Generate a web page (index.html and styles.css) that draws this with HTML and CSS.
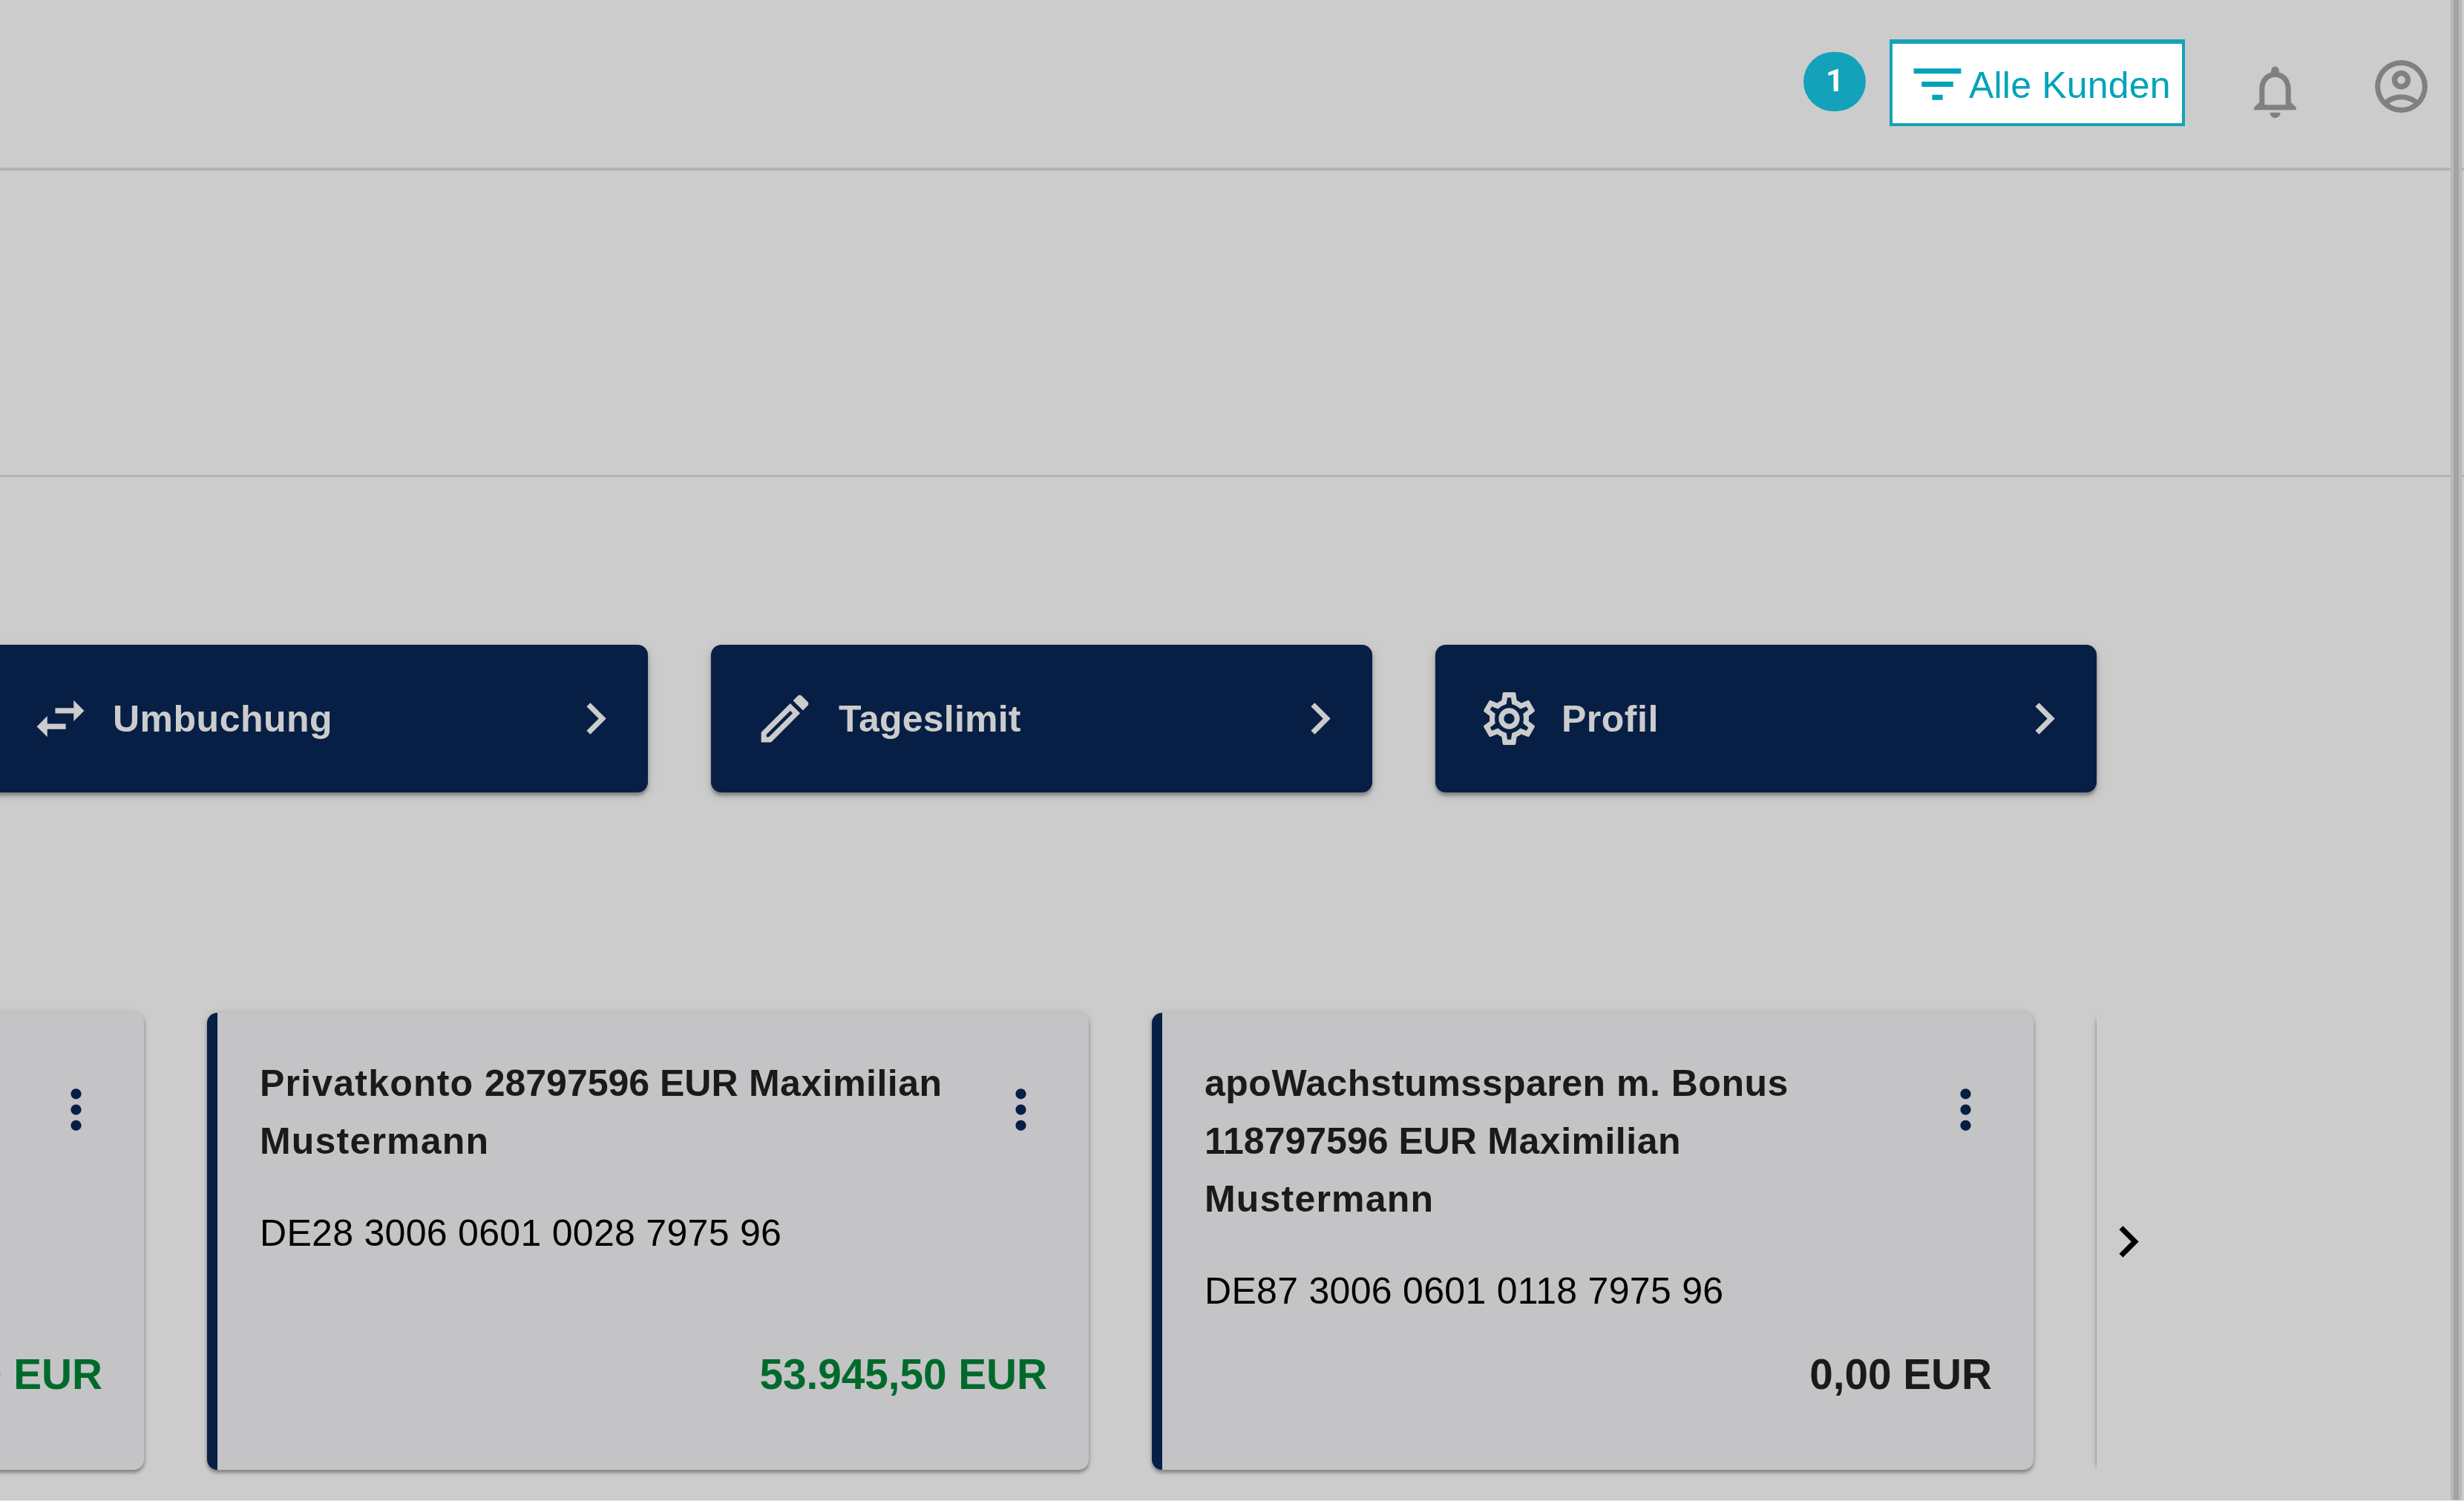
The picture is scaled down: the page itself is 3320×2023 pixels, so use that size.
FILE: index.html
```
<!DOCTYPE html>
<html lang="de">
    <head>
        <meta charset="utf-8">
        <title>Banking Übersicht</title>
        <link rel="stylesheet" href="styles.css">
    </head>
    <body>
        <!-- icon set, 24px grid -->
        <svg class="symbols">
            <symbol id="chevron" viewBox="0 0 24 24"><path d="M10 6L8.59 7.41 13.17 12l-4.58 4.59L10 18l6-6z"/></symbol>
            <symbol id="more" viewBox="0 0 24 24"><path d="M12 8c1.1 0 2-.9 2-2s-.9-2-2-2-2 .9-2 2 .9 2 2 2zm0 2c-1.1 0-2 .9-2 2s.9 2 2 2 2-.9 2-2-.9-2-2-2zm0 6c-1.1 0-2 .9-2 2s.9 2 2 2 2-.9 2-2-.9-2-2-2z"/></symbol>
        </svg>
        <div class="page">
            <header class="topbar">
                <span class="step">1</span>
                <button class="filter" type="button">
                    <svg class="icon" viewBox="0 0 24 24"><path d="M10 18h4v-2h-4v2zM3 6v2h18V6H3zm3 7h12v-2H6v2z"/></svg>
                    <span>Alle Kunden</span>
                </button>
                <svg class="icon bell" viewBox="0 0 24 24"><path d="M12 22c1.1 0 2-.9 2-2h-4c0 1.1.9 2 2 2zm6-6v-5c0-3.07-1.63-5.64-4.5-6.32V4c0-.83-.67-1.5-1.5-1.5s-1.5.67-1.5 1.5v.68C7.64 5.36 6 7.92 6 11v5l-2 2v1h16v-1l-2-2zm-2 1H8v-6c0-2.48 1.51-4.5 4-4.5s4 2.02 4 4.5v6z"/></svg>
                <svg class="icon user" viewBox="0 0 24 24"><path fill-rule="evenodd" d="M12 2a10 10 0 1 0 0 20 10 10 0 0 0 0-20zM7.35 18.5C8.66 17.56 10.26 17 12 17s3.34.56 4.65 1.5C15.34 19.44 13.74 20 12 20s-3.34-.56-4.65-1.5zm10.79-1.38C16.45 15.8 14.32 15 12 15s-4.45.8-6.14 2.12A7.96 7.96 0 0 1 4 12c0-4.42 3.58-8 8-8s8 3.58 8 8c0 1.95-.7 3.73-1.86 5.12zM12 5.9c-1.98 0-3.6 1.62-3.6 3.6s1.62 3.6 3.6 3.6 3.6-1.62 3.6-3.6-1.62-3.6-3.6-3.6zm0 5.1a1.5 1.5 0 1 1 0-3 1.5 1.5 0 0 1 0 3z"/></svg>
            </header>
            <div class="subbar"></div>
            <nav class="actions">
                <a class="action">
                    <svg class="icon" viewBox="0 0 24 24"><path d="M6.99 11L3 15l3.99 4v-3H14v-2H6.99v-3zM21 9l-3.99-4v3H10v2h7.01v3L21 9z"/></svg>
                    <span class="label">Umbuchung</span>
                    <svg class="icon"><use href="#chevron"/></svg>
                </a>
                <a class="action">
                    <svg class="icon" viewBox="0 0 24 24"><path d="M14.06 9.02l.92.92L5.92 19H5v-.92l9.06-9.06M17.66 3c-.25 0-.51.1-.7.29l-1.83 1.83 3.75 3.75 1.83-1.83c.39-.39.39-1.02 0-1.41l-2.34-2.34c-.2-.2-.45-.29-.71-.29zm-3.6 3.19L3 17.25V21h3.75L17.81 9.94l-3.75-3.75z"/></svg>
                    <span class="label tight">Tageslimit</span>
                    <svg class="icon"><use href="#chevron"/></svg>
                </a>
                <a class="action">
                    <svg class="icon" viewBox="0 0 24 24"><path d="M19.43 12.98c.04-.32.07-.64.07-.98 0-.34-.03-.66-.07-.98l2.11-1.65c.19-.15.24-.42.12-.64l-2-3.46c-.09-.16-.26-.25-.44-.25-.06 0-.12.01-.17.03l-2.49 1c-.52-.4-1.08-.73-1.69-.98l-.38-2.65C14.46 2.18 14.25 2 14 2h-4c-.25 0-.46.18-.49.42l-.38 2.65c-.61.25-1.17.59-1.69.98l-2.49-1c-.06-.02-.12-.03-.18-.03-.17 0-.34.09-.43.25l-2 3.46c-.13.22-.07.49.12.64l2.11 1.65c-.04.32-.07.65-.07.98 0 .33.03.66.07.98l-2.11 1.65c-.19.15-.24.42-.12.64l2 3.46c.09.16.26.25.44.25.06 0 .12-.01.17-.03l2.49-1c.52.4 1.08.73 1.69.98l.38 2.65c.03.24.24.42.49.42h4c.25 0 .46-.18.49-.42l.38-2.65c.61-.25 1.17-.59 1.69-.98l2.49 1c.06.02.12.03.18.03.17 0 .34-.09.43-.25l2-3.46c.12-.22.07-.49-.12-.64l-2.11-1.65zm-1.98-1.71c.04.31.05.52.05.73 0 .21-.02.43-.05.73l-.14 1.13.89.7 1.08.84-.7 1.21-1.27-.51-1.04-.42-.9.68c-.43.32-.84.56-1.25.73l-1.06.43-.16 1.13-.2 1.35h-1.4l-.19-1.35-.16-1.13-1.06-.43c-.43-.18-.83-.41-1.23-.71l-.91-.7-1.06.43-1.27.51-.7-1.21 1.08-.84.89-.7-.14-1.13c-.03-.31-.05-.54-.05-.74s.02-.43.05-.73l.14-1.13-.89-.7-1.08-.84.7-1.21 1.27.51 1.04.42.9-.68c.43-.32.84-.56 1.25-.73l1.06-.43.16-1.13.2-1.35h1.39l.19 1.35.16 1.13 1.06.43c.43.18.83.41 1.23.71l.91.7 1.06-.43 1.27-.51.7 1.21-1.07.85-.89.7.14 1.13zM12 8c-2.21 0-4 1.79-4 4s1.79 4 4 4 4-1.79 4-4-1.79-4-4-4zm0 6c-1.1 0-2-.9-2-2s.9-2 2-2 2 .9 2 2-.9 2-2 2z"/></svg>
                    <span class="label">Profil</span>
                    <svg class="icon"><use href="#chevron"/></svg>
                </a>
            </nav>
            <div class="slider">
                <div class="accounts">
                    <div class="account">
                        <div class="head">
                            <h3></h3>
                            <svg class="icon"><use href="#more"/></svg>
                        </div>
                        <p class="amount positive">0 EUR</p>
                    </div>
                    <div class="account">
                        <div class="head">
                            <h3><span class="wide">Privatkonto</span> <span class="number">28797596 EUR</span> Maximilian <span class="wide">Mustermann</span></h3>
                            <svg class="icon"><use href="#more"/></svg>
                        </div>
                        <p class="iban">DE28 3006 0601 0028 7975 96</p>
                        <p class="amount positive">53.945,50 EUR</p>
                    </div>
                    <div class="account">
                        <div class="head">
                            <h3>apoWachstumssparen m. Bonus <span class="number">118797596 EUR</span> Maximilian <span class="wide">Mustermann</span></h3>
                            <svg class="icon"><use href="#more"/></svg>
                        </div>
                        <p class="iban">DE87 3006 0601 0118 7975 96</p>
                        <p class="amount">0,00 EUR</p>
                    </div>
                    <div class="account"></div>
                </div>
                <svg class="icon next"><use href="#chevron"/></svg>
            </div>
        </div>
        <div class="scrollbar"></div>
    </body>
</html>
```
FILE: styles.css
```
:root {
    --navy: #071f45;
    --teal: #14a2ba;
    --line: #b3b3b3;
    background-color: #eee;
}
* {
    box-sizing: border-box;
}
body {
    margin: 0;
    height: 2022px;
    overflow: hidden;
    background-color: #ccc;
    color: #1a1a1a;
    font-family: "Liberation Sans", Arial, sans-serif;
    font-size: 50px;
}
h3, p {
    margin: 0;
}
.symbols {
    display: none;
}
.icon {
    flex: none;
    width: 85px;
    height: 85px;
    fill: currentColor;
}
.topbar {
    display: flex;
    align-items: flex-start;
    height: 230px;
    padding-right: 42px;
    border-bottom: 4px solid var(--line);
    color: #808080;
}
.step {
    width: 84px;
    height: 80px;
    margin: 70px 32px 0 auto;
    border-radius: 42px;
    background-color: var(--teal);
    color: #fff;
    font: bold 42px/78px Roboto, sans-serif;
    text-align: center;
}
.filter {
    display: flex;
    align-items: center;
    width: 398px;
    height: 117px;
    margin-top: 53px;
    padding: 2px 0 0 18px;
    border: 4px solid var(--teal);
    border-top-width: 6px;
    background-color: #fff;
    color: #00a3b9;
    font: inherit;
    letter-spacing: .2px;
    white-space: nowrap;
}
.filter span {
    padding-top: 2px;
}
.bell {
    margin: 81px 0 0 79px;
}
.user {
    margin: 74px 0 0 85px;
}
.subbar {
    height: 413px;
    border-bottom: 3px solid var(--line);
}
.actions {
    display: flex;
    gap: 85px;
    margin: 226px 0 0 -18px;
}
.action {
    display: flex;
    align-items: center;
    width: 891px;
    height: 199px;
    padding: 0 28px 0 57px;
    border-radius: 14px;
    background-color: var(--navy);
    box-shadow: 0 4px 4px rgba(0, 0, 0, .3), 0 4px 14px rgba(0, 0, 0, .15);
    color: #ccc;
}
.label {
    flex: 1;
    margin-left: 28px;
    font-weight: bold;
    letter-spacing: .5px;
}
.label.tight {
    margin-left: 30px;
    letter-spacing: .2px;
}
/* the row keeps the shadows but cuts off the next card */
.slider {
    display: flex;
    align-items: center;
    margin-top: 277px;
}
.accounts {
    display: flex;
    justify-content: flex-end;
    gap: 85px;
    width: 2825px;
    padding: 20px 0;
    overflow: hidden;
}
.account {
    display: flex;
    flex: none;
    flex-direction: column;
    width: 1188px;
    height: 616px;
    padding: 56px 56px 89px 57px;
    border-left: 14px solid var(--navy);
    border-radius: 14px;
    background-color: #c4c4c6;
    box-shadow: 0 4px 4px rgba(0, 0, 0, .3), 0 0 8px rgba(0, 0, 0, .15);
}
.account:last-child {
    margin-right: -1188px;
}
.head {
    display: flex;
    justify-content: space-between;
}
.head h3 {
    width: 945px;
    font-size: 50px;
    line-height: 78px;
    letter-spacing: .5px;
}
.head .wide {
    letter-spacing: 1.2px;
}
.head .number {
    letter-spacing: 0;
}
.head .icon {
    margin: 32px -7px -40px 0;
    color: var(--navy);
}
.iban {
    margin-top: 46px;
    color: #000;
    line-height: 78px;
    letter-spacing: .3px;
}
.amount {
    margin-top: auto;
    font-size: 56.7px;
    font-weight: bold;
    line-height: 78px;
    text-align: right;
}
.positive {
    color: #006a2c;
}
.next {
    color: #000;
}
.scrollbar {
    position: absolute;
    top: 0;
    left: 3302px;
    width: 15px;
    height: 2022px;
    border: solid #b8b8b8;
    border-width: 0 4px;
    background-color: #a3a3a3;
}
```
